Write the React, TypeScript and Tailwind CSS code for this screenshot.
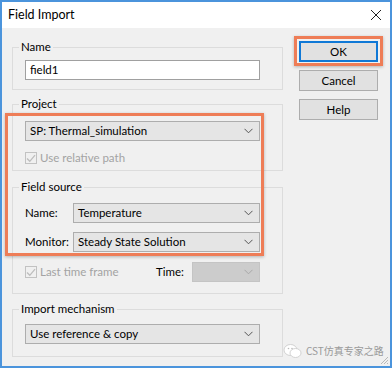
import React from "react";

const font = { fontFamily: 'Lato, "Noto Sans", "Noto Sans CJK SC", sans-serif' };

function Chevron({ color = "#555" }: { color?: string }) {
  return (
    <svg width="9" height="6" viewBox="0 0 9 6" className="shrink-0">
      <path d="M0.5 0.8 L4.5 4.8 L8.5 0.8" fill="none" stroke={color} strokeWidth="1" />
    </svg>
  );
}

function Combo({ text, className = "", disabled = false }: { text: string; className?: string; disabled?: boolean }) {
  return (
    <div
      className={`h-[20px] flex items-center justify-between pl-[4px] pr-[6px] border ${
        disabled ? "border-[#c4c4c4] bg-[#cccccc]" : "border-[#adadad] bg-[#e5e5e5]"
      } ${className}`}
    >
      <span className="text-[11.5px] leading-none text-[#000] whitespace-nowrap">{text}</span>
      <Chevron color={disabled ? "#a8a8a8" : "#555"} />
    </div>
  );
}

function Check({ label }: { label: string }) {
  return (
    <div className="flex items-center gap-[3px]">
      <div className="w-[12px] h-[12px] border border-[#c2c2c2] bg-[#f0f0f0] flex items-center justify-center">
        <svg width="10" height="9" viewBox="0 0 10 9">
          <path d="M1 4.5 L3.8 7.3 L9 1.2" fill="none" stroke="#bdbdbd" strokeWidth="1.3" />
        </svg>
      </div>
      <span className="text-[11.5px] leading-none text-[#a3a3a3] whitespace-nowrap">{label}</span>
    </div>
  );
}

function Group({ label, className = "", children }: { label: string; className?: string; children?: React.ReactNode }) {
  return (
    <div className={`relative border border-[#dcdcdc] ${className}`}>
      <span className="absolute -top-[9px] left-[6px] px-[2px] bg-[#f0f0f0] text-[11.5px] leading-[16px] text-[#000] whitespace-nowrap">
        {label}
      </span>
      {children}
    </div>
  );
}

function Button({ text, primary = false }: { text: string; primary?: boolean }) {
  return (
    <div
      className={`w-[79px] h-[21px] flex items-center justify-center bg-[#e1e1e1] text-[11.5px] leading-none text-[#000] ${
        primary ? "border-2 border-[#0f78d6]" : "border border-[#adadad]"
      }`}
    >
      {text}
    </div>
  );
}

export default function App() {
  return (
    <div className="w-[392px] h-[369px] bg-white" style={font}>
      <div className="relative w-[392px] h-[368px] border-2 border-[#4b94dc] bg-[#f0f0f0] flex flex-col">
        {/* Title bar */}
        <div className="h-[26px] bg-white flex items-center justify-between pl-[6px] pr-[8px]">
          <span className="text-[12.5px] text-[#000]">Field Import</span>
          <svg width="12" height="12" viewBox="0 0 12 12">
            <path d="M1 1 L11 11 M11 1 L1 11" stroke="#222" strokeWidth="1" />
          </svg>
        </div>
        {/* Body */}
        <div className="flex flex-1 pl-[10px]">
          <div className="w-[271px] flex flex-col">
            <Group label="Name" className="mt-[19px] h-[43px] pt-[12px] pl-[12px]">
              <div className="w-[235px] h-[20px] border border-[#a0a0a0] bg-white flex items-center pl-[4px] text-[11.5px] leading-none">
                field1
              </div>
            </Group>
            <Group label="Project" className="mt-[14px] h-[67px] pt-[16px] pl-[12px]">
              <Combo text="SP: Thermal_simulation" className="w-[235px]" />
              <div className="mt-[11px]">
                <Check label="Use relative path" />
              </div>
            </Group>
            <Group label="Field source" className="mt-[16px] h-[107px] pt-[15px] pl-[12px]">
              <div className="flex items-center">
                <span className="w-[48px] text-[11.5px] leading-none">Name:</span>
                <Combo text="Temperature" className="w-[187px]" />
              </div>
              <div className="flex items-center mt-[9px]">
                <span className="w-[48px] text-[11.5px] leading-none">Monitor:</span>
                <Combo text="Steady State Solution" className="w-[187px]" />
              </div>
              <div className="flex items-center mt-[10px]">
                <div className="w-[131px]">
                  <Check label="Last time frame" />
                </div>
                <span className="w-[36px] text-[11.5px] leading-none">Time:</span>
                <Combo text="" className="w-[68px]" disabled />
              </div>
            </Group>
            <Group label="Import mechanism" className="mt-[15px] h-[48px] pt-[14px] pl-[12px]">
              <Combo text="Use reference & copy" className="w-[235px]" />
            </Group>
          </div>
          <div className="ml-[16px] pt-[13px] flex flex-col gap-[8px]">
            <Button text="OK" primary />
            <Button text="Cancel" />
            <Button text="Help" />
          </div>
        </div>

        {/* Annotation highlights */}
        <div className="absolute left-[3px] top-[111px] w-[259px] h-[143px] border-[3px] border-[#ee7d57] shadow-[0_1px_3px_rgba(0,0,0,0.25)] pointer-events-none" />
        <div className="absolute left-[292px] top-[34px] w-[89px] h-[30px] border-[3px] border-[#ee7d57] shadow-[0_1px_3px_rgba(0,0,0,0.25)] pointer-events-none" />

        {/* Watermark */}
        <div className="absolute left-[281px] top-[341px] flex items-center gap-[3px] whitespace-nowrap">
          <svg width="20" height="16" viewBox="0 0 20 16">
            <ellipse cx="7.5" cy="7" rx="6.5" ry="5.5" fill="#fff" stroke="#c8c8c8" strokeWidth="0.8" />
            <ellipse cx="12.5" cy="10" rx="5.5" ry="4.5" fill="#fff" stroke="#c8c8c8" strokeWidth="0.8" />
            <circle cx="5.5" cy="5.5" r="0.8" fill="#bbb" />
            <circle cx="9" cy="5.5" r="0.8" fill="#bbb" />
          </svg>
          <span className="text-[10px] leading-none text-[#9a9a9a] whitespace-nowrap" style={{ fontFamily: '"Noto Sans CJK SC", sans-serif' }}>
            CST仿真专家之路
          </span>
        </div>
        {/* Resize grip */}
        <svg className="absolute right-[1px] bottom-[1px]" width="10" height="10" viewBox="0 0 10 10">
          <path d="M9 2 L2 9 M9 5 L5 9 M9 8 L8 9" stroke="#b8b8b8" strokeWidth="1" />
        </svg>
      </div>
    </div>
  );
}
